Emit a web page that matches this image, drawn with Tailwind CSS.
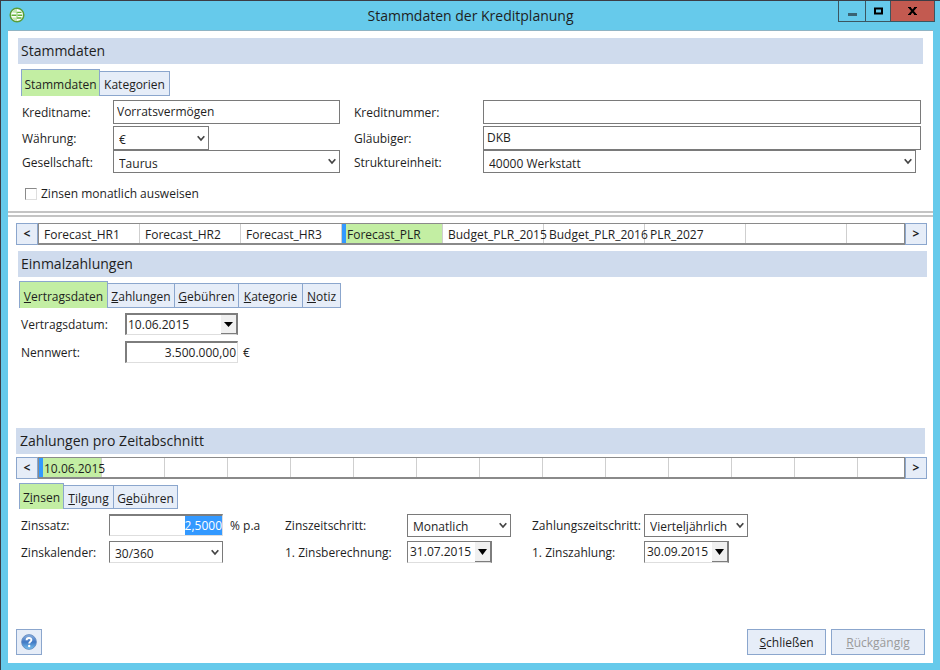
<!DOCTYPE html>
<html lang="de">
<head>
  <meta charset="UTF-8" />
  <meta name="viewport" content="width=device-width, initial-scale=1" />
  <title>Stammdaten der Kreditplanung</title>
  <script src="https://cdn.jsdelivr.net/npm/@tailwindcss/browser@4"></script>
  <style>
    body {
      font-family: 'Open Sans', 'Noto Sans', sans-serif;
    }
  </style>
</head>
<body class="bg-[#66caeb] text-[#1e1e1e] text-xs">
  <div class="min-h-screen flex flex-col border-t border-l border-[#3c3c44] pl-[7px] pr-[7px] pb-[7px]">

    <!-- Title bar -->
    <header class="relative h-[29px] shrink-0 flex items-center justify-center">
      <svg class="absolute left-px top-[6px] w-4 h-4" viewBox="0 0 16 16" aria-hidden="true">
        <circle cx="8" cy="8" r="6.8" fill="#fff" stroke="#5a9e38" stroke-width="1.5" />
        <path d="M8 2A6 6 0 0 0 3 5.500L8 6Z" fill="#c5e6b0" />
        <path d="M3 10.500A6 6 0 0 0 8 14V10.500Z" fill="#c5e6b0" />
        <path d="M2.500 8.200h5M8 5.400h4.500M8.500 8.200h4.800M8 11h4.500" stroke="#62b236" stroke-width="1.400" />
        <path d="M8 5v6.500" stroke="#8fca6c" stroke-width="1" />
      </svg>
      <h1 class="text-sm">Stammdaten der Kreditplanung</h1>
      <div class="absolute right-[-2px] top-0 flex h-[21px] border border-t-0 border-[#3b5560]">
        <button type="button" aria-label="Minimieren" class="w-[27px] flex items-center justify-center border-r border-[#3b5560]">
          <svg class="w-[9px] h-[9px]" viewBox="0 0 9 9"><path d="M0 6h9v3H0z" fill="#3a6373" /></svg>
        </button>
        <button type="button" aria-label="Maximieren" class="w-[25px] flex items-center justify-center border-r border-[#3b5560]">
          <svg class="w-[9px] h-[8px]" viewBox="0 0 9 8"><path d="M1 1.5h7v5H1z" fill="none" stroke="#000" stroke-width="2" /></svg>
        </button>
        <button type="button" aria-label="Fenster schließen" class="w-[43px] flex items-center justify-center bg-[#c35a50]">
          <svg class="w-[9px] h-[8px]" viewBox="0 0 9 8"><path d="M0 .5h3M6 .5h3M0 7.5h3M6 7.5h3" stroke="#000" /><path d="M1.5.5l6 7M7.5.5l-6 7" stroke="#000" stroke-width="2" /></svg>
        </button>
      </div>
    </header>

    <main class="flex-1 flex flex-col bg-white border-t border-[#8fb4c4] pt-[7px]">

      <!-- Stammdaten -->
      <section>
        <h2 class="ml-[10px] mr-[10px] h-[26px] pl-[3px] flex items-center bg-[#cfdbed] text-sm">Stammdaten</h2>
        <div class="mt-[5px] ml-[13px] h-[27px] flex items-end">
          <button type="button" class="h-[27px] w-[79px] border border-b-0 border-[#8ba6cd] bg-[#c3eea3] pt-[3px]">Stammdaten</button>
          <button type="button" class="h-[25px] w-[70px] border border-l-0 border-[#8ba6cd] bg-[#e6edf8] pt-[3px]">Kategorien</button>
        </div>
        <div class="mt-1 ml-[14px] mr-3 grid grid-cols-[91px_227px_143px_1fr] grid-rows-[26px_24px_23px] items-start leading-[26px]">
          <label for="kreditname">Kreditname:</label>
          <input id="kreditname" type="text" value="Vorratsvermögen" class="h-6 w-full border border-[#7a7a7a] bg-white px-[3px]" />
          <label for="kreditnummer" class="pl-[14px]">Kreditnummer:</label>
          <input id="kreditnummer" type="text" class="h-6 w-full border border-[#7a7a7a] bg-white px-[3px]" />

          <label for="waehrung">Währung:</label>
          <div class="relative w-24">
            <select id="waehrung" class="block appearance-none h-6 w-full border border-[#7a7a7a] bg-white pl-[5px]"><option>€</option></select>
            <svg class="absolute right-1 top-[9px] w-2 h-[7px] pointer-events-none" viewBox="0 0 8 7"><path d="M.7 1.2L4 5 7.3 1.2" fill="none" stroke="#444" stroke-width="1.7" /></svg>
          </div>
          <label for="glaeubiger" class="pl-[14px]">Gläubiger:</label>
          <input id="glaeubiger" type="text" value="DKB" class="h-6 w-full border border-[#7a7a7a] bg-white px-[3px]" />

          <label for="gesellschaft">Gesellschaft:</label>
          <div class="relative">
            <select id="gesellschaft" class="block appearance-none h-[23px] w-full border border-[#7a7a7a] bg-white pl-[5px] pb-[2px]"><option>Taurus</option></select>
            <svg class="absolute right-1 top-[8px] w-2 h-[7px] pointer-events-none" viewBox="0 0 8 7"><path d="M.7 1.2L4 5 7.3 1.2" fill="none" stroke="#444" stroke-width="1.7" /></svg>
          </div>
          <label for="struktureinheit" class="pl-[14px]">Struktureinheit:</label>
          <div class="relative mr-[5px]">
            <select id="struktureinheit" class="block appearance-none h-[23px] w-full border border-[#7a7a7a] bg-white pl-[5px] pb-[2px]"><option>40000 Werkstatt</option></select>
            <svg class="absolute right-1 top-[8px] w-2 h-[7px] pointer-events-none" viewBox="0 0 8 7"><path d="M.7 1.2L4 5 7.3 1.2" fill="none" stroke="#444" stroke-width="1.7" /></svg>
          </div>
        </div>
        <label class="mt-3 ml-[17px] h-[18px] flex items-center gap-1">
          <input type="checkbox" class="appearance-none w-3 h-3 border border-t-[#8a8a8a] border-l-[#8a8a8a] border-r-[#dedede] border-b-[#dedede] bg-white" />
          Zinsen monatlich ausweisen
        </label>
      </section>

      <div class="mt-2 h-[6px] border-y-2 border-[#c4c4c4]"></div>

      <!-- Szenarien -->
      <nav class="mt-[6px] ml-2 mr-[6px] h-[22px] flex">
        <button type="button" class="w-[22px] shrink-0 border border-[#8ba6cd] bg-[#e6edf8] font-bold">&lt;</button>
        <div class="flex-1 flex overflow-hidden border border-b-2 border-[#8a8a8a] bg-white leading-[21px] whitespace-nowrap">
          <button type="button" class="w-[101px] shrink-0 border-r border-[#cfcfcf] pl-[5px] text-left">Forecast_HR1</button>
          <button type="button" class="w-[101px] shrink-0 border-r border-[#cfcfcf] pl-[5px] text-left">Forecast_HR2</button>
          <button type="button" class="w-[101px] shrink-0 border-r border-[#cfcfcf] pl-[5px] text-left">Forecast_HR3</button>
          <button type="button" class="w-[101px] shrink-0 border-r border-[#cfcfcf] border-l-4 border-l-[#3399ff] bg-[#c3eea3] pl-px text-left">Forecast_PLR</button>
          <button type="button" class="w-[101px] shrink-0 border-r border-[#cfcfcf] pl-[5px] text-left">Budget_PLR_2015</button>
          <button type="button" class="w-[101px] shrink-0 border-r border-[#cfcfcf] pl-[5px] text-left">Budget_PLR_2016</button>
          <button type="button" class="w-[101px] shrink-0 border-r border-[#cfcfcf] pl-[5px] text-left">PLR_2027</button>
          <div class="w-[101px] shrink-0 border-r border-[#cfcfcf]"></div>
        </div>
        <button type="button" class="w-[22px] shrink-0 border border-[#8ba6cd] bg-[#e6edf8] font-bold">&gt;</button>
      </nav>

      <!-- Einmalzahlungen -->
      <section class="mt-[6px]">
        <h2 class="ml-[10px] mr-[6px] h-[26px] pl-[3px] flex items-center bg-[#cfdbed] text-sm">Einmalzahlungen</h2>
        <div class="mt-1 ml-[11px] h-[27px] flex items-end">
          <button type="button" class="h-[27px] w-[89px] border border-b-0 border-[#8ba6cd] bg-[#c3eea3] pt-[3px]"><u>V</u>ertragsdaten</button>
          <button type="button" class="h-[25px] w-[67px] border border-l-0 border-[#8ba6cd] bg-[#e6edf8] pt-[3px]"><u>Z</u>ahlungen</button>
          <button type="button" class="h-[25px] w-16 border border-l-0 border-[#8ba6cd] bg-[#e6edf8] pt-[3px]"><u>G</u>ebühren</button>
          <button type="button" class="h-[25px] w-16 border border-l-0 border-[#8ba6cd] bg-[#e6edf8] pt-[3px]"><u>K</u>ategorie</button>
          <button type="button" class="h-[25px] w-[38px] border border-l-0 border-[#8ba6cd] bg-[#e6edf8] pt-[3px]"><u>N</u>otiz</button>
        </div>
        <div class="mt-[5px] ml-[13px] grid grid-cols-[104px_113px_1fr] grid-rows-[28px_23px] items-start leading-6">
          <label for="vertragsdatum">Vertragsdatum:</label>
          <div class="flex h-[22px] border-t-2 border-x-2 border-b border-[#7d7d7d] border-b-[#dedede] bg-white">
            <input id="vertragsdatum" type="text" value="10.06.2015" class="min-w-0 flex-1 pl-px" />
            <button type="button" aria-label="Kalender öffnen" class="w-[15px] flex items-center justify-center border-b border-[#7d7d7d] bg-[#f0f0f0]">
              <svg class="w-[9px] h-[5px]" viewBox="0 0 9 5"><path d="M0 0h9L4.500 5z" fill="#000" /></svg>
            </button>
          </div>
          <span></span>
          <label for="nennwert">Nennwert:</label>
          <input id="nennwert" type="text" value="3.500.000,00" class="h-[22px] w-full border-t-2 border-l-2 border-r border-b border-[#7d7d7d] border-r-[#dedede] border-b-[#dedede] bg-white pr-px text-right" />
          <span class="pl-[5px]">€</span>
        </div>
      </section>

      <!-- Zahlungen pro Zeitabschnitt -->
      <section class="mt-16">
        <h2 class="ml-2 mr-2 h-[26px] pl-1 flex items-center bg-[#cfdbed] text-sm">Zahlungen pro Zeitabschnitt</h2>
        <div class="mt-[3px] ml-2 mr-[6px] h-[22px] flex">
          <button type="button" class="w-[22px] shrink-0 border border-[#8ba6cd] bg-[#e6edf8] font-bold">&lt;</button>
          <div class="flex-1 flex overflow-hidden border border-b-2 border-[#8a8a8a] bg-white leading-[21px] whitespace-nowrap">
            <button type="button" class="w-[63px] shrink-0 border-r border-[#cfcfcf] border-l-4 border-l-[#3399ff] bg-[#c3eea3] pl-px text-left">10.06.2015</button>
            <div class="w-[63px] shrink-0 border-r border-[#cfcfcf]"></div>
            <div class="w-[63px] shrink-0 border-r border-[#cfcfcf]"></div>
            <div class="w-[63px] shrink-0 border-r border-[#cfcfcf]"></div>
            <div class="w-[63px] shrink-0 border-r border-[#cfcfcf]"></div>
            <div class="w-[63px] shrink-0 border-r border-[#cfcfcf]"></div>
            <div class="w-[63px] shrink-0 border-r border-[#cfcfcf]"></div>
            <div class="w-[63px] shrink-0 border-r border-[#cfcfcf]"></div>
            <div class="w-[63px] shrink-0 border-r border-[#cfcfcf]"></div>
            <div class="w-[63px] shrink-0 border-r border-[#cfcfcf]"></div>
            <div class="w-[63px] shrink-0 border-r border-[#cfcfcf]"></div>
            <div class="w-[63px] shrink-0 border-r border-[#cfcfcf]"></div>
            <div class="w-[63px] shrink-0 border-r border-[#cfcfcf]"></div>
          </div>
          <button type="button" class="w-[22px] shrink-0 border border-[#8ba6cd] bg-[#e6edf8] font-bold">&gt;</button>
        </div>
        <div class="mt-1 ml-[11px] h-[26px] flex items-end">
          <button type="button" class="h-[26px] w-[45px] border border-b-0 border-[#8ba6cd] bg-[#c3eea3] pt-[3px]">Z<u>i</u>nsen</button>
          <button type="button" class="h-6 w-[50px] border border-l-0 border-[#8ba6cd] bg-[#e6edf8] pt-[3px]"><u>T</u>ilgung</button>
          <button type="button" class="h-6 w-16 border border-l-0 border-[#8ba6cd] bg-[#e6edf8] pt-[3px]">G<u>e</u>bühren</button>
        </div>
        <div class="mt-[5px] ml-[13px] grid grid-cols-[88px_114px_62px_122px_104px_133px_104px] grid-rows-[27px_23px] items-start leading-6">
          <label for="zinssatz">Zinssatz:</label>
          <input id="zinssatz" type="text" value="2,5000" class="h-[22px] w-full border-t-2 border-l border-r border-b border-[#7d7d7d] border-r-[#dedede] border-b-[#dedede] bg-white text-right selection:bg-[#3399ff] selection:text-white outline-none" />
          <span class="pl-[7px]">% p.a</span>
          <label for="zinszeitschritt">Zinszeitschritt:</label>
          <div class="relative">
            <select id="zinszeitschritt" class="block appearance-none h-[23px] w-full border border-[#7a7a7a] bg-white pl-[5px]"><option>Monatlich</option></select>
            <svg class="absolute right-1 top-[8px] w-2 h-[7px] pointer-events-none" viewBox="0 0 8 7"><path d="M.7 1.2L4 5 7.3 1.2" fill="none" stroke="#444" stroke-width="1.7" /></svg>
          </div>
          <label for="zahlungszeitschritt" class="pl-[21px]">Zahlungszeitschritt:</label>
          <div class="relative">
            <select id="zahlungszeitschritt" class="block appearance-none h-[23px] w-full border border-[#7a7a7a] bg-white pl-[5px]"><option>Vierteljährlich</option></select>
            <svg class="absolute right-1 top-[8px] w-2 h-[7px] pointer-events-none" viewBox="0 0 8 7"><path d="M.7 1.2L4 5 7.3 1.2" fill="none" stroke="#444" stroke-width="1.7" /></svg>
          </div>

          <label for="zinskalender">Zinskalender:</label>
          <div class="relative">
            <select id="zinskalender" class="block appearance-none h-[22px] w-full border border-[#7a7a7a] border-b-[#dedede] bg-white pl-[5px]"><option>30/360</option></select>
            <svg class="absolute right-1 top-[8px] w-2 h-[7px] pointer-events-none" viewBox="0 0 8 7"><path d="M.7 1.2L4 5 7.3 1.2" fill="none" stroke="#444" stroke-width="1.7" /></svg>
          </div>
          <span></span>
          <label for="zinsberechnung">1. Zinsberechnung:</label>
          <div class="flex h-[22px] w-[85px] border border-r-2 border-[#7d7d7d] border-b-[#dedede] bg-white">
            <input id="zinsberechnung" type="text" value="31.07.2015" class="min-w-0 flex-1 pl-[2px]" />
            <button type="button" aria-label="Kalender öffnen" class="w-[15px] flex items-center justify-center border-b border-[#7d7d7d] bg-[#f0f0f0]">
              <svg class="w-[9px] h-[6px]" viewBox="0 0 9 6"><path d="M0 0h9L4.500 6z" fill="#000" /></svg>
            </button>
          </div>
          <label for="zinszahlung" class="pl-[21px]">1. Zinszahlung:</label>
          <div class="flex h-[22px] w-[85px] border border-r-2 border-[#7d7d7d] border-b-[#dedede] bg-white">
            <input id="zinszahlung" type="text" value="30.09.2015" class="min-w-0 flex-1 pl-[2px]" />
            <button type="button" aria-label="Kalender öffnen" class="w-[15px] flex items-center justify-center border-b border-[#7d7d7d] bg-[#f0f0f0]">
              <svg class="w-[9px] h-[6px]" viewBox="0 0 9 6"><path d="M0 0h9L4.500 6z" fill="#000" /></svg>
            </button>
          </div>
        </div>
      </section>

      <footer class="mt-auto mb-2 ml-2 mr-2 flex items-center">
        <button type="button" aria-label="Hilfe" class="w-[26px] h-[26px] flex items-center justify-center border border-[#8ba6cd] bg-[#e6edf8]">
          <svg class="w-4 h-4" viewBox="0 0 16 16">
            <defs>
              <linearGradient id="helpFill" x1="0" y1="0" x2="0" y2="1">
                <stop offset="0" stop-color="#8fb2e0" />
                <stop offset=".5" stop-color="#3f78c4" />
                <stop offset="1" stop-color="#7cc4f0" />
              </linearGradient>
            </defs>
            <circle cx="8" cy="8" r="7.4" fill="url(#helpFill)" stroke="#5f86bd" stroke-width=".8" />
            <path d="M5.6 6.2C5.6 3.2 10.5 3.3 10.4 6 10.3 7.7 8.2 7.6 8.2 9.6" fill="none" stroke="#fff" stroke-width="1.9" />
            <circle cx="8.2" cy="12" r="1.2" fill="#fff" />
          </svg>
        </button>
        <button type="button" class="ml-auto w-[79px] h-[26px] border border-[#8ba6cd] bg-[#e6edf8] pt-px"><u>S</u>chließen</button>
        <button type="button" disabled class="ml-[5px] w-[94px] h-[26px] border border-[#8ba6cd] bg-[#e6edf8] pt-px text-[#9a9a9a]"><u>R</u>ückgängig</button>
      </footer>
    </main>
  </div>

  <script>
    // the rate field starts focused with its value selected
    const zinssatz = document.getElementById('zinssatz');
    zinssatz.focus();
    zinssatz.select();
  </script>
</body>
</html>
